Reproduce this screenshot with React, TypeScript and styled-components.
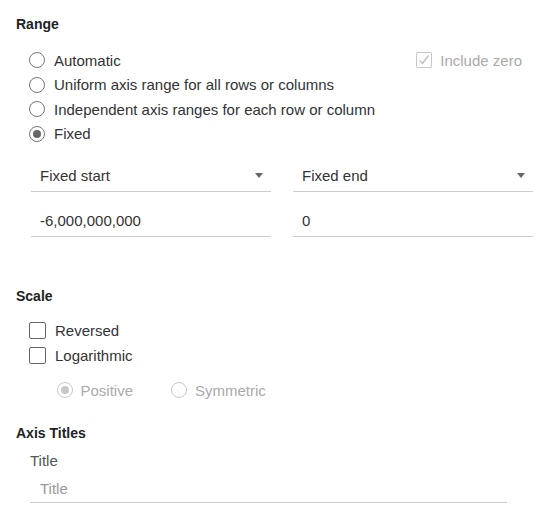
import React from "react";
import styled, { createGlobalStyle } from "styled-components";

const GlobalStyle = createGlobalStyle`
  html, body { margin: 0; padding: 0; background: #fff; }
  body { font-family: "Liberation Sans", Arial, sans-serif; color: #333; }
  * { box-sizing: border-box; }
`;

const Page = styled.div`
  width: 549px;
  padding: 16px 16px 0 16px;
  display: flex;
  flex-direction: column;
`;

const Heading = styled.h3<{ $top?: number }>`
  margin: ${(p) => p.$top ?? 0}px 0 0 0;
  font-size: 14px;
  line-height: 16px;
  font-weight: bold;
  color: #222;
`;

const OptionList = styled.div<{ $top: number; $indent: number; $row: number }>`
  margin-top: ${(p) => p.$top}px;
  padding-left: ${(p) => p.$indent}px;
  display: flex;
  flex-direction: column;
  > * { height: ${(p) => p.$row}px; }
`;

const Row = styled.div`
  display: flex;
  align-items: center;
`;

const Option = styled.label<{ $disabled?: boolean; $gap?: number }>`
  display: flex;
  align-items: center;
  gap: ${(p) => p.$gap ?? 9}px;
  font-size: 15px;
  line-height: 17px;
  color: ${(p) => (p.$disabled ? "#aaa" : "#333")};
  white-space: nowrap;
`;

const RadioCircle = styled.span<{ $checked?: boolean; $disabled?: boolean }>`
  width: 16px;
  height: 16px;
  border-radius: 50%;
  border: 1px solid ${(p) => (p.$disabled ? "#c8c8c8" : "#777")};
  display: flex;
  align-items: center;
  justify-content: center;
  flex: none;
  &::after {
    content: "";
    display: ${(p) => (p.$checked ? "block" : "none")};
    width: 8px;
    height: 8px;
    border-radius: 50%;
    background: ${(p) => (p.$disabled ? "#c8c8c8" : "#666")};
  }
`;

const CheckBox = styled.span<{ $disabled?: boolean; $size?: number }>`
  width: ${(p) => p.$size ?? 17}px;
  height: ${(p) => p.$size ?? 17}px;
  border-radius: 2px;
  border: 1px solid ${(p) => (p.$disabled ? "#c8c8c8" : "#666")};
  display: flex;
  align-items: center;
  justify-content: center;
  flex: none;
`;

const IncludeZero = styled(Option)`
  margin-left: auto;
  margin-right: 11px;
  gap: 8px;
`;

const FieldGrid = styled.div`
  margin-top: 14.7px;
  padding-left: 15px;
  display: grid;
  grid-template-columns: 240px 240px;
  column-gap: 22px;
  row-gap: 14px;
`;

const Select = styled.div`
  height: 31px;
  border-bottom: 1px solid #ccc;
  display: flex;
  align-items: center;
  justify-content: space-between;
  padding: 0 8px 1px 9px;
  font-size: 15px;
  color: #333;
`;

const Arrow = styled.span`
  width: 0;
  height: 0;
  border-left: 4.5px solid transparent;
  border-right: 4.5px solid transparent;
  border-top: 5px solid #666;
`;

const TextInput = styled.input<{ $height?: number; $pad?: number }>`
  display: block;
  width: 100%;
  height: ${(p) => p.$height ?? 31}px;
  border: none;
  border-bottom: 1px solid #ccc;
  outline: none;
  background: transparent;
  padding: 0 0 ${(p) => p.$pad ?? 2}px 9px;
  font-family: "Liberation Sans", Arial, sans-serif;
  font-size: 15px;
  color: #333;
  &::placeholder { color: #999; }
`;

const SubOptions = styled.div`
  margin-top: 10px;
  height: 25px;
  padding-left: 40.5px;
  display: flex;
  align-items: center;
  gap: 38px;
`;

const FieldLabel = styled.div`
  margin-top: 10.5px;
  padding-left: 14px;
  font-size: 15px;
  line-height: 17px;
  color: #555;
`;

const TitleField = styled.div`
  margin-top: 6.5px;
  margin-left: 14px;
  width: 477px;
`;

const Check = () => (
  <svg width="12" height="12" viewBox="0 0 12 12">
    <path d="M1.5 6.5 L4.5 9.5 L10.5 1.5" fill="none" stroke="#bbb" strokeWidth="1.3" />
  </svg>
);

export default function App() {
  return (
    <>
      <GlobalStyle />
      <Page>
        <Heading>Range</Heading>
        <OptionList $top={15.7} $indent={13} $row={24.67}>
          <Row>
            <Option>
              <RadioCircle />
              Automatic
            </Option>
            <IncludeZero $disabled>
              <CheckBox $disabled $size={16}>
                <Check />
              </CheckBox>
              Include zero
            </IncludeZero>
          </Row>
          <Row>
            <Option>
              <RadioCircle />
              Uniform axis range for all rows or columns
            </Option>
          </Row>
          <Row>
            <Option>
              <RadioCircle />
              Independent axis ranges for each row or column
            </Option>
          </Row>
          <Row>
            <Option>
              <RadioCircle $checked />
              Fixed
            </Option>
          </Row>
        </OptionList>

        <FieldGrid>
          <Select>
            Fixed start
            <Arrow />
          </Select>
          <Select>
            Fixed end
            <Arrow />
          </Select>
          <TextInput defaultValue="-6,000,000,000" />
          <TextInput defaultValue="0" />
        </FieldGrid>

        <Heading $top={51}>Scale</Heading>
        <OptionList $top={13.5} $indent={13} $row={25}>
          <Row>
            <Option $gap={9}>
              <CheckBox />
              Reversed
            </Option>
          </Row>
          <Row>
            <Option $gap={9}>
              <CheckBox />
              Logarithmic
            </Option>
          </Row>
        </OptionList>
        <SubOptions>
          <Option $disabled $gap={8}>
            <RadioCircle $checked $disabled />
            Positive
          </Option>
          <Option $disabled $gap={8}>
            <RadioCircle $disabled />
            Symmetric
          </Option>
        </SubOptions>

        <Heading $top={22.5}>Axis Titles</Heading>
        <FieldLabel>Title</FieldLabel>
        <TitleField>
          <TextInput placeholder="Title" $height={28} $pad={1} style={{ paddingLeft: 10 }} />
        </TitleField>
      </Page>
    </>
  );
}
